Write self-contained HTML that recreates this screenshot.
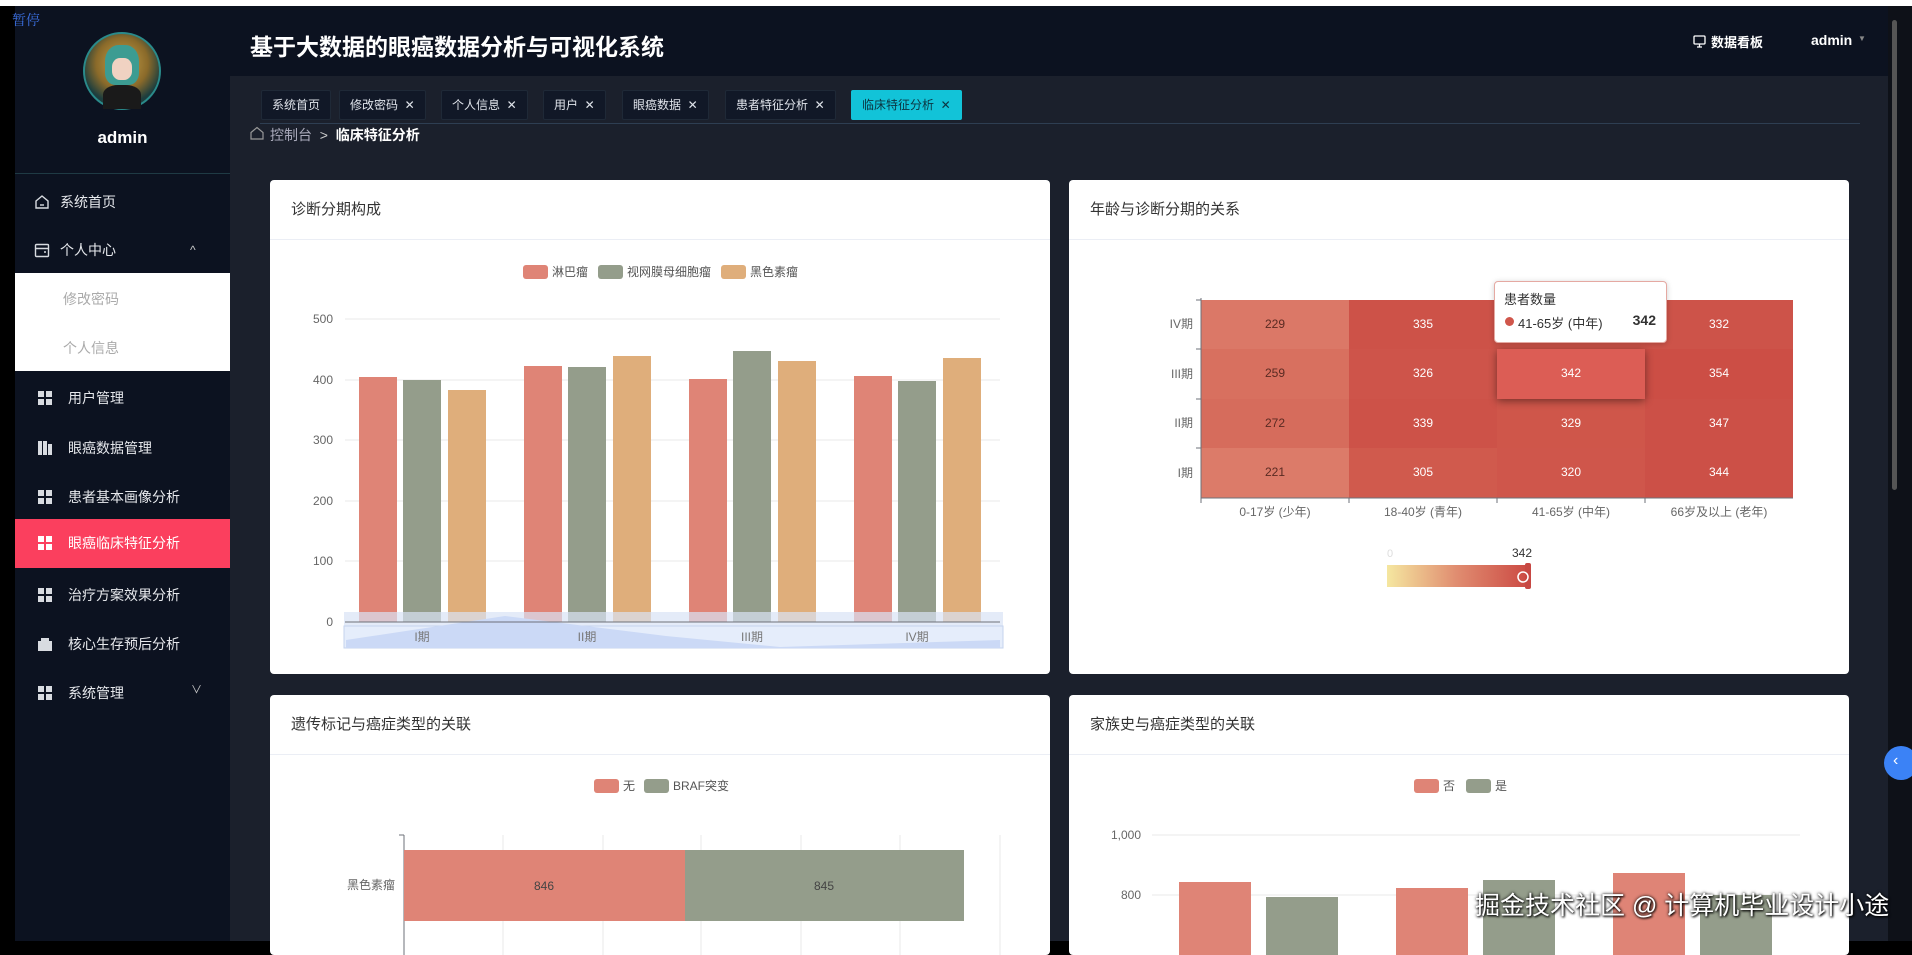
<!DOCTYPE html>
<html><head><meta charset="utf-8">
<style>
*{margin:0;padding:0;box-sizing:border-box}
body{width:1912px;height:941px;overflow:hidden;background:#000;font-family:"Liberation Sans","Noto Sans CJK SC",sans-serif;position:relative}
.a{position:absolute}
.side{left:15px;top:6px;width:215px;height:935px;background:#0c1220}
.mi{position:absolute;left:15px;width:215px;height:48px;color:#e6e8ec;font-size:14px;line-height:48px}
.mi .t{position:absolute;left:53px}
.gi{position:absolute;left:23px;top:17px;width:14px;height:14px}
.gi i{position:absolute;width:6px;height:6px;background:#d8dbe0}
.card{position:absolute;background:#fff;border-radius:4px}
.card .h{height:60px;border-bottom:1px solid #ebeef5;padding-left:21px;line-height:60px;font-size:15px;color:#333}
.tab{position:absolute;top:90px;height:30px;background:#111827;border:1px solid #1f2937;color:#dfe3ea;font-size:12px;line-height:28px;padding:0 10px;border-radius:2px}
.cell{position:absolute;width:148px;height:49.5px;color:#fff;font-size:12px;text-align:center;line-height:49px}
</style></head><body>
<div class="a" style="left:0;top:0;width:1912px;height:6px;background:#fff"></div>
<div class="a side"></div>
<div class="a" style="left:12px;top:10px;color:#3b6fe0;font-size:14px;font-family:'Noto Serif CJK SC',serif">暂停</div>
<div class="a" style="left:83px;top:32px;width:78px;height:78px;border-radius:50%;background:radial-gradient(circle at 50% 40%,#caa34a 0,#8a6a2a 45%,#1d3e3e 70%);border:2px solid #2a8a8a"></div>
<div class="a" style="left:105px;top:45px;width:34px;height:40px;border-radius:40% 40% 30% 30%;background:#3c9c92"></div>
<div class="a" style="left:112px;top:58px;width:20px;height:22px;border-radius:40%;background:#f0d2c2"></div>
<div class="a" style="left:103px;top:85px;width:38px;height:24px;border-radius:40% 40% 0 0;background:#1a1a1a"></div>
<div class="a" style="left:15px;top:128px;width:215px;text-align:center;color:#fff;font-size:17px;font-weight:bold">admin</div>
<div class="a" style="left:15px;top:173px;width:215px;height:1px;background:#1f3a44"></div>
<div class="mi" style="top:178px"><svg class="a" style="left:19px;top:16px" width="16" height="16" viewBox="0 0 16 16" fill="none" stroke="#d8dbe0" stroke-width="1.4"><path d="M2 7L8 2l6 5v7H2z"/><path d="M6 11h4"/></svg><span class="t" style="left:45px">系统首页</span></div>
<div class="mi" style="top:226px"><svg class="a" style="left:19px;top:17px" width="16" height="15" viewBox="0 0 16 15" fill="none" stroke="#d8dbe0" stroke-width="1.4"><rect x="1.5" y="1.5" width="13" height="12" rx="1"/><path d="M1.5 5.5h13M10 9h2"/></svg><span class="t" style="left:45px">个人中心</span><span class="a" style="left:175px;top:0;font-size:12px;color:#ccc">^</span></div>
<div class="a" style="left:15px;top:273px;width:215px;height:98px;background:#fff"></div>
<div class="a" style="left:63px;top:289px;color:#aaa;font-size:14px">修改密码</div>
<div class="a" style="left:63px;top:338px;color:#aaa;font-size:14px">个人信息</div>
<div class="mi" style="top:374px"><div class="gi"><i style="left:0;top:0"></i><i style="left:8px;top:0"></i><i style="left:0;top:8px"></i><i style="left:8px;top:8px"></i></div><span class="t">用户管理</span></div>
<div class="mi" style="top:424px"><div class="gi"><i style="left:0;top:0;height:14px;width:4px"></i><i style="left:5px;top:0;height:14px;width:4px"></i><i style="left:10px;top:3px;height:11px;width:4px"></i></div><span class="t">眼癌数据管理</span></div>
<div class="mi" style="top:473px"><div class="gi"><i style="left:0;top:0"></i><i style="left:8px;top:0"></i><i style="left:0;top:8px"></i><i style="left:8px;top:8px"></i></div><span class="t">患者基本画像分析</span></div>
<div class="mi" style="top:519px;background:#fb3f5e;height:49px"><div class="gi"><i style="left:0;top:0;background:#fff"></i><i style="left:8px;top:0;background:#fff"></i><i style="left:0;top:8px;background:#fff"></i><i style="left:8px;top:8px;background:#fff"></i></div><span class="t" style="color:#fff">眼癌临床特征分析</span></div>
<div class="mi" style="top:571px"><div class="gi"><i style="left:0;top:0"></i><i style="left:8px;top:0"></i><i style="left:0;top:8px"></i><i style="left:8px;top:8px"></i></div><span class="t">治疗方案效果分析</span></div>
<div class="mi" style="top:620px"><div class="gi"><i style="left:0;top:4px;width:14px;height:10px"></i><i style="left:3px;top:1px;width:8px;height:4px"></i></div><span class="t">核心生存预后分析</span></div>
<div class="mi" style="top:669px"><div class="gi"><i style="left:0;top:0"></i><i style="left:8px;top:0"></i><i style="left:0;top:8px"></i><i style="left:8px;top:8px"></i></div><span class="t">系统管理</span><span class="a" style="left:176px;top:-3px;font-size:11px;color:#ccc">∨</span></div>
<div class="a" style="left:230px;top:6px;width:1658px;height:70px;background:#0c1220"></div>
<div class="a" style="left:250px;top:28px;color:#fff;font-size:23px;font-weight:bold">基于大数据的眼癌数据分析与可视化系统</div>
<svg class="a" style="left:1693px;top:35px" width="13" height="13" viewBox="0 0 13 13" fill="none" stroke="#fff" stroke-width="1.3"><rect x="1" y="1" width="11" height="8" rx="1"/><path d="M6.5 9v3M4 12h5"/></svg>
<div class="a" style="left:1711px;top:32px;color:#fff;font-size:13px;font-weight:bold">数据看板</div>
<div class="a" style="left:1811px;top:32px;color:#fff;font-size:14px;font-weight:bold">admin</div>
<div class="a" style="left:1858px;top:34px;color:#888;font-size:8px">▼</div>
<div class="a" style="left:230px;top:76px;width:1658px;height:865px;background:#1b202c"></div>
<div class="a" style="left:1888px;top:6px;width:24px;height:935px;background:#0e1118"></div>
<div class="a" style="left:1892px;top:20px;width:5px;height:470px;background:#555;border-radius:3px"></div>
<div class="tab" style="left:261px">系统首页</div>
<div class="tab" style="left:339px">修改密码 &nbsp;✕</div>
<div class="tab" style="left:441px">个人信息 &nbsp;✕</div>
<div class="tab" style="left:543px">用户 &nbsp;✕</div>
<div class="tab" style="left:622px">眼癌数据 &nbsp;✕</div>
<div class="tab" style="left:725px">患者特征分析 &nbsp;✕</div>
<div class="tab" style="left:851px;background:#12c3d8;border-color:#12c3d8;color:#0c3440">临床特征分析 &nbsp;✕</div>
<div class="a" style="left:260px;top:123px;width:1600px;height:1px;background:#2e3e52"></div>
<svg class="a" style="left:250px;top:126px" width="14" height="14" viewBox="0 0 14 14" fill="none" stroke="#999" stroke-width="1.2"><path d="M1 6.5L7 1.5l6 5V13H1z"/></svg>
<div class="a" style="left:270px;top:125px;color:#aab;font-size:14px">控制台 &nbsp;<span style="color:#ccc">&gt;</span> &nbsp;<b style="color:#fff;font-weight:bold">临床特征分析</b></div>

<div class="card" style="left:270px;top:180px;width:780px;height:494px"><div class="h">诊断分期构成</div>
<svg class="a" style="left:0;top:0" width="780" height="494">
<g font-size="12" fill="#555">
<rect x="253" y="85" width="25" height="14" rx="3" fill="#df8476"/><text x="282" y="96">淋巴瘤</text>
<rect x="328" y="85" width="25" height="14" rx="3" fill="#949d8b"/><text x="357" y="96">视网膜母细胞瘤</text>
<rect x="451" y="85" width="25" height="14" rx="3" fill="#dfae7b"/><text x="480" y="96">黑色素瘤</text>
</g>
<g stroke="#e8e8e8"><line x1="75" y1="139" x2="730" y2="139"/><line x1="75" y1="200" x2="730" y2="200"/><line x1="75" y1="260" x2="730" y2="260"/><line x1="75" y1="321" x2="730" y2="321"/><line x1="75" y1="381" x2="730" y2="381"/></g>
<g font-size="12" fill="#666" text-anchor="end"><text x="63" y="143">500</text><text x="63" y="204">400</text><text x="63" y="264">300</text><text x="63" y="325">200</text><text x="63" y="385">100</text><text x="63" y="446">0</text></g>
<g>
<rect x="89" y="197" width="38" height="245" fill="#df8476"/><rect x="133" y="200" width="38" height="242" fill="#949d8b"/><rect x="178" y="210" width="38" height="232" fill="#dfae7b"/>
<rect x="254" y="186" width="38" height="256" fill="#df8476"/><rect x="298" y="187" width="38" height="255" fill="#949d8b"/><rect x="343" y="176" width="38" height="266" fill="#dfae7b"/>
<rect x="419" y="199" width="38" height="243" fill="#df8476"/><rect x="463" y="171" width="38" height="271" fill="#949d8b"/><rect x="508" y="181" width="38" height="261" fill="#dfae7b"/>
<rect x="584" y="196" width="38" height="246" fill="#df8476"/><rect x="628" y="201" width="38" height="241" fill="#949d8b"/><rect x="673" y="178" width="38" height="264" fill="#dfae7b"/>
</g>
<rect x="74" y="432" width="659" height="14" fill="#d8e2f5" opacity=".7"/>
<rect x="74" y="446" width="659" height="22" fill="#e5edfb" stroke="#c5d3ee"/>
<path d="M76 460 L235 436 L396 456 L510 467 L730 460 L730 468 L76 468z" fill="#cbd9f6"/>
<line x1="75" y1="442" x2="730" y2="442" stroke="#6e7079"/>
<g font-size="12" fill="#777" text-anchor="middle"><text x="152" y="461">I期</text><text x="317" y="461">II期</text><text x="482" y="461">III期</text><text x="647" y="461">IV期</text></g>
</svg></div>

<div class="card" style="left:1069px;top:180px;width:780px;height:494px"><div class="h">年龄与诊断分期的关系</div>
<div class="a" style="left:132px;top:120px;width:592px;height:198px;background:#cf554a"></div>
<div class="cell" style="left:132px;top:120px;background:#db7867;color:#5a2a22">229</div>
<div class="cell" style="left:280px;top:120px;background:#cd5248">335</div>
<div class="cell" style="left:428px;top:120px;background:#cf5449">335</div>
<div class="cell" style="left:576px;top:120px;background:#cd5349">332</div>
<div class="cell" style="left:132px;top:169px;background:#d8705f;color:#5a2a22">259</div>
<div class="cell" style="left:280px;top:169px;background:#ce544a">326</div>
<div class="cell" style="left:576px;top:169px;background:#cc4e45">354</div>
<div class="cell" style="left:132px;top:219px;background:#d66c5c;color:#5a2a22">272</div>
<div class="cell" style="left:280px;top:219px;background:#cd5248">339</div>
<div class="cell" style="left:428px;top:219px;background:#cf564a">329</div>
<div class="cell" style="left:576px;top:219px;background:#cc5047">347</div>
<div class="cell" style="left:132px;top:268px;background:#dc7b69;color:#5a2a22">221</div>
<div class="cell" style="left:280px;top:268px;background:#d05a4d">305</div>
<div class="cell" style="left:428px;top:268px;background:#cf564b">320</div>
<div class="cell" style="left:576px;top:268px;background:#cc5047">344</div>
<div class="cell" style="left:428px;top:169px;background:#dc5d55;box-shadow:0 2px 8px rgba(0,0,0,.45);z-index:2">342</div>
<div class="a" style="left:425px;top:101px;width:173px;height:62px;background:#fff;border:1px solid #e5a9a2;border-radius:4px;box-shadow:0 1px 6px rgba(0,0,0,.2);z-index:3;font-size:13px;color:#333">
<div style="position:absolute;left:9px;top:7px">患者数量</div>
<div style="position:absolute;left:10px;top:35px;width:9px;height:9px;border-radius:50%;background:#d0564b"></div>
<div style="position:absolute;left:23px;top:31px">41-65岁 (中年)</div>
<div style="position:absolute;right:10px;top:30px;font-weight:bold;font-size:14px">342</div></div>
<svg class="a" style="left:0;top:0" width="780" height="494">
<line x1="132" y1="118" x2="132" y2="319" stroke="#6e7079"/><line x1="132" y1="318" x2="724" y2="318" stroke="#6e7079"/>
<g stroke="#6e7079"><line x1="127" y1="120" x2="132" y2="120"/><line x1="127" y1="169" x2="132" y2="169"/><line x1="127" y1="219" x2="132" y2="219"/><line x1="127" y1="268" x2="132" y2="268"/><line x1="280" y1="318" x2="280" y2="323"/><line x1="428" y1="318" x2="428" y2="323"/><line x1="576" y1="318" x2="576" y2="323"/><line x1="132" y1="318" x2="132" y2="323"/></g>
<g font-size="12" fill="#666" text-anchor="end"><text x="124" y="148">IV期</text><text x="124" y="198">III期</text><text x="124" y="247">II期</text><text x="124" y="297">I期</text></g>
<g font-size="12" fill="#666" text-anchor="middle"><text x="206" y="336">0-17岁 (少年)</text><text x="354" y="336">18-40岁 (青年)</text><text x="502" y="336">41-65岁 (中年)</text><text x="650" y="336">66岁及以上 (老年)</text></g>
<defs><linearGradient id="vg"><stop offset="0" stop-color="#f5e7a0"/><stop offset=".5" stop-color="#e08c70"/><stop offset="1" stop-color="#cc4b44"/></linearGradient></defs>
<rect x="318" y="385" width="140" height="22" fill="url(#vg)"/>
<rect x="456" y="383" width="6" height="26" rx="2" fill="#c74843"/><circle cx="454" cy="397" r="5" fill="none" stroke="#fff" stroke-width="1.5"/>
<text x="318" y="377" font-size="11" fill="#ddd">0</text><text x="443" y="377" font-size="12" fill="#333">342</text>
</svg></div>

<div class="card" style="left:270px;top:695px;width:780px;height:260px"><div class="h">遗传标记与癌症类型的关联</div>
<svg class="a" style="left:0;top:0" width="780" height="260">
<rect x="324" y="84" width="25" height="14" rx="3" fill="#df8476"/><text x="353" y="95" font-size="12" fill="#555">无</text>
<rect x="374" y="84" width="25" height="14" rx="3" fill="#949d8b"/><text x="403" y="95" font-size="12" fill="#555">BRAF突变</text>
<g stroke="#e8e8e8"><line x1="233" y1="140" x2="233" y2="260"/><line x1="333" y1="140" x2="333" y2="260"/><line x1="431" y1="140" x2="431" y2="260"/><line x1="531" y1="140" x2="531" y2="260"/><line x1="630" y1="140" x2="630" y2="260"/><line x1="730" y1="140" x2="730" y2="260"/></g>
<line x1="134" y1="140" x2="134" y2="260" stroke="#6e7079"/><line x1="129" y1="140" x2="134" y2="140" stroke="#6e7079"/>
<rect x="134" y="155" width="281" height="71" fill="#df8476"/><rect x="415" y="155" width="279" height="71" fill="#949d8b"/>
<text x="274" y="195" font-size="12" fill="#444" text-anchor="middle">846</text><text x="554" y="195" font-size="12" fill="#444" text-anchor="middle">845</text>
<text x="125" y="194" font-size="12" fill="#666" text-anchor="end">黑色素瘤</text>
</svg></div>

<div class="card" style="left:1069px;top:695px;width:780px;height:260px"><div class="h">家族史与癌症类型的关联</div>
<svg class="a" style="left:0;top:0" width="780" height="260">
<rect x="345" y="84" width="25" height="14" rx="3" fill="#df8476"/><text x="374" y="95" font-size="12" fill="#555">否</text>
<rect x="397" y="84" width="25" height="14" rx="3" fill="#949d8b"/><text x="426" y="95" font-size="12" fill="#555">是</text>
<g stroke="#e8e8e8"><line x1="83" y1="140" x2="731" y2="140"/><line x1="83" y1="200" x2="731" y2="200"/></g>
<g font-size="12" fill="#666" text-anchor="end"><text x="72" y="144">1,000</text><text x="72" y="204">800</text></g>
<rect x="110" y="187" width="72" height="80" fill="#df8476"/><rect x="197" y="202" width="72" height="70" fill="#949d8b"/>
<rect x="327" y="193" width="72" height="80" fill="#df8476"/><rect x="414" y="185" width="72" height="80" fill="#949d8b"/>
<rect x="544" y="178" width="72" height="90" fill="#df8476"/><rect x="631" y="200" width="72" height="70" fill="#949d8b"/>
</svg></div>
<div class="a" style="left:1475px;top:886px;color:#fff;font-size:25px;text-shadow:0 0 3px #000,1px 1px 2px #000">掘金技术社区 @ 计算机毕业设计小途</div>
<div class="a" style="left:1884px;top:746px;width:34px;height:34px;border-radius:50%;background:#3b82f6"></div>
<div class="a" style="left:1893px;top:752px;color:#fff;font-size:16px">‹</div>
</body></html>
